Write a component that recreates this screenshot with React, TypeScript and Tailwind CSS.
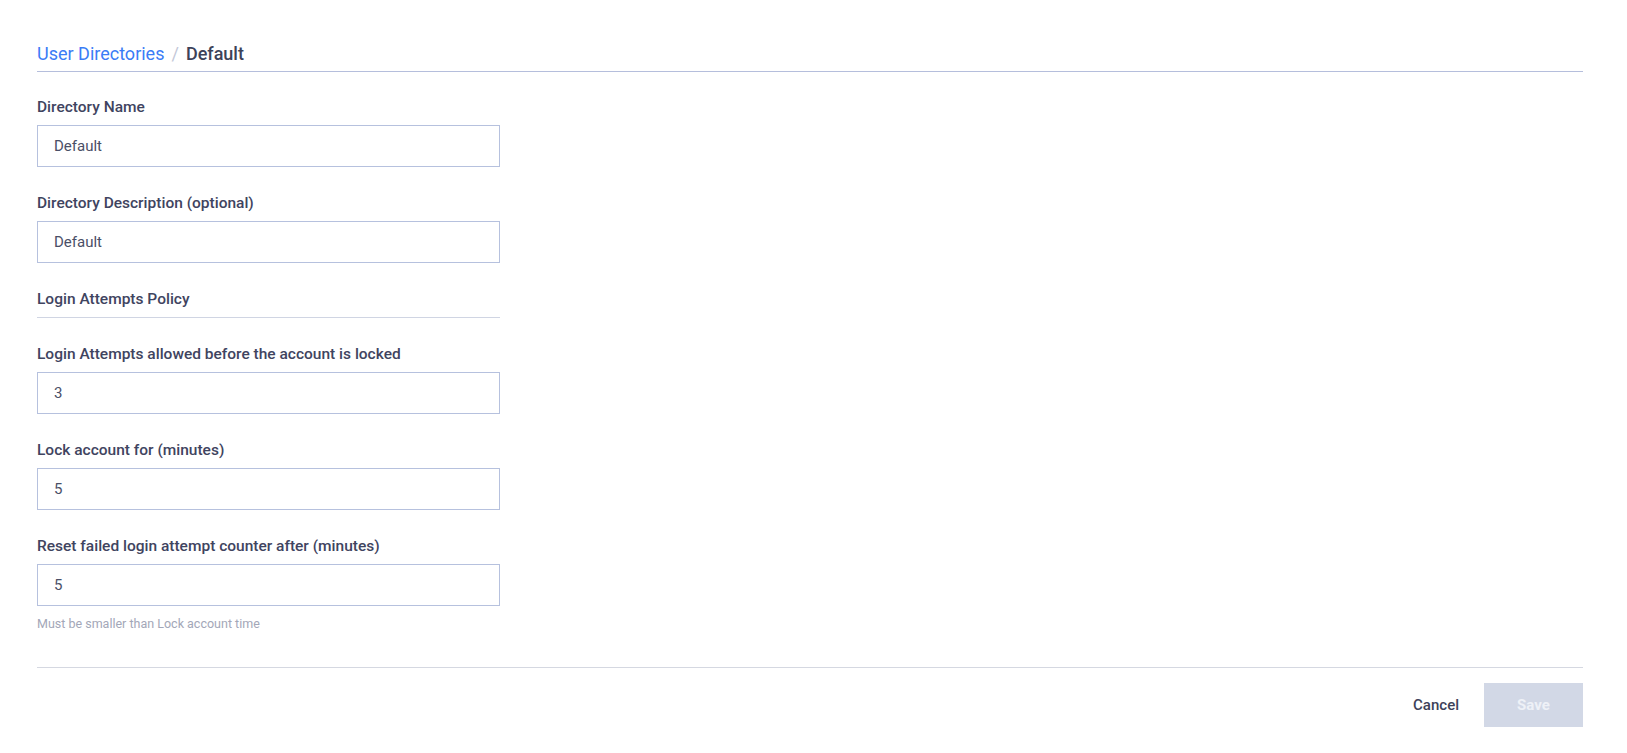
import React from 'react';

const Field = ({ label, value }: { label: string; value: string }) => (
    <div className="flex flex-col">
        <label className="text-[15.5px] leading-5 font-medium text-[#3f4460] mb-2">{label}</label>
        <input
            readOnly
            value={value}
            className="w-[463px] h-[42px] border border-[#b6c1de] px-4 text-[15px] text-[#4a4f67] outline-none bg-white"
        />
    </div>
);

export default function App() {
    return (
        <div className="min-h-screen bg-white pl-[37px] pr-[44px] pt-[42px] font-['Roboto',sans-serif]">
            <div className="flex items-center border-b border-[#b5bedc] pb-[5px] text-[18px] leading-6">
                <span className="text-[#3b7cf6]">User Directories</span>
                <span className="text-[#c3c8d8] mx-[7px]">/</span>
                <span className="font-medium text-[#3d4259]">Default</span>
            </div>

            <div className="flex flex-col gap-[26px] pt-[25px]">
                <Field label="Directory Name" value="Default" />
                <Field label="Directory Description (optional)" value="Default" />
                <div className="w-[463px] text-[15.5px] leading-5 font-medium text-[#3f4460] pb-2 border-b border-[#d0d5e3]">
                    Login Attempts Policy
                </div>
            </div>

            <div className="flex flex-col gap-[26px] pt-[26px]">
                <Field label="Login Attempts allowed before the account is locked" value="3" />
                <Field label="Lock account for (minutes)" value="5" />
                <div className="flex flex-col">
                    <Field label="Reset failed login attempt counter after (minutes)" value="5" />
                    <p className="mt-[10px] text-[12.5px] leading-4 text-[#a3a7b8]">Must be smaller than Lock account time</p>
                </div>
            </div>

            <div className="mt-[35px] border-t border-[#d5d8e1] pt-[15px] flex justify-end items-center gap-[25px]">
                <button className="text-[15px] font-medium text-[#3d4259]">Cancel</button>
                <button className="w-[99px] h-[44px] bg-[#d2d8e6] text-[15px] font-bold text-[#eef1f7]">Save</button>
            </div>
        </div>
    );
}
